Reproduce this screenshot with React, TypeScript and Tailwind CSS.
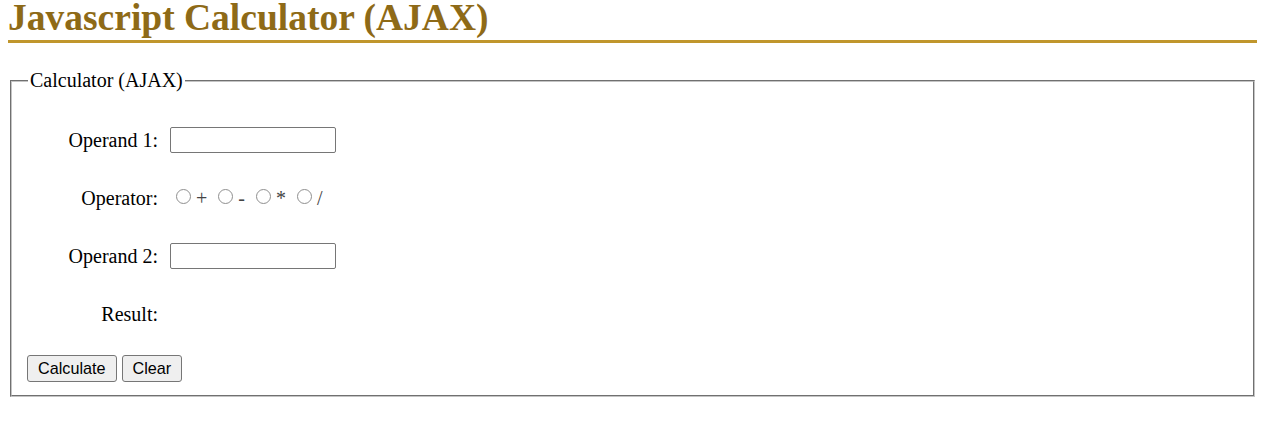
import React, { useState } from 'react';

const serif = { fontFamily: '"Liberation Serif", "Times New Roman", serif' };

const ops = ['+', '-', '*', '/'];

export default function App() {
  const [a, setA] = useState('');
  const [b, setB] = useState('');
  const [op, setOp] = useState('');
  const [result, setResult] = useState('');

  const calculate = () => {
    const x = parseFloat(a);
    const y = parseFloat(b);
    if (isNaN(x) || isNaN(y) || !op) return;
    const r = op === '+' ? x + y : op === '-' ? x - y : op === '*' ? x * y : x / y;
    setResult(String(r));
  };

  const clear = () => {
    setA('');
    setB('');
    setOp('');
    setResult('');
  };

  return (
    <div className="bg-white min-h-screen pl-[8px] pr-[25px] font-['Liberation_Serif',serif] text-black">
      <h1 className="text-[37.5px] leading-[36px] font-bold text-[#8e6a17] pb-[4px] border-b-[3px] border-[#c0962c] mb-[26px]">
        Javascript Calculator (AJAX)
      </h1>

      <fieldset className="mx-[2px] border-2 [border-style:groove] border-[#c4c4c4] pl-[15px] pr-[15px] pt-[19px] pb-[13px] text-[20px]">
        <legend className="ml-[1px] px-[2px] leading-[23px]">Calculator (AJAX)</legend>

        <div className="grid grid-cols-[131px_1fr] gap-x-[12px]">
          <div className="h-[58px] flex items-center justify-end">Operand 1:</div>
          <div className="h-[58px] flex items-center">
            <input
              value={a}
              onChange={(e) => setA(e.target.value)}
              className="w-[166px] h-[26px] border border-[#767676] rounded-[2px] px-[2px] text-[16px] outline-none"
            />
          </div>

          <div className="h-[58px] flex items-center justify-end">Operator:</div>
          <div className="h-[58px] flex items-center">
            {ops.map((o, i) => (
              <label key={o} className="flex items-center cursor-pointer">
                <input
                  type="radio"
                  name="op"
                  checked={op === o}
                  onChange={() => setOp(o)}
                  className="sr-only"
                />
                <span
                  className={`block w-[15px] h-[15px] shrink-0 rounded-full border border-[#8f8f8f] bg-white mr-[5px] mb-[3px] ${i === 0 ? 'ml-[6px]' : 'ml-[11px]'} ${op === o ? 'border-[4px] border-[#0075ff]' : ''}`}
                />
                <span style={serif} className="text-[#444]">{o}</span>
              </label>
            ))}
          </div>

          <div className="h-[58px] flex items-center justify-end">Operand 2:</div>
          <div className="h-[58px] flex items-center">
            <input
              value={b}
              onChange={(e) => setB(e.target.value)}
              className="w-[166px] h-[26px] border border-[#767676] rounded-[2px] px-[2px] text-[16px] outline-none"
            />
          </div>

          <div className="h-[58px] flex items-center justify-end">Result:</div>
          <div className="h-[58px] flex items-center">{result}</div>
        </div>

        <div className="flex gap-[5px] mt-[12px] font-['Liberation_Sans',Arial,sans-serif] text-[16.2px]">
          <button
            onClick={calculate}
            className="h-[27px] px-[10px] bg-[#efefef] border border-[#767676] rounded-[3px] leading-none"
          >
            Calculate
          </button>
          <button
            onClick={clear}
            className="h-[27px] px-[10px] bg-[#efefef] border border-[#767676] rounded-[3px] leading-none"
          >
            Clear
          </button>
        </div>
      </fieldset>
    </div>
  );
}
